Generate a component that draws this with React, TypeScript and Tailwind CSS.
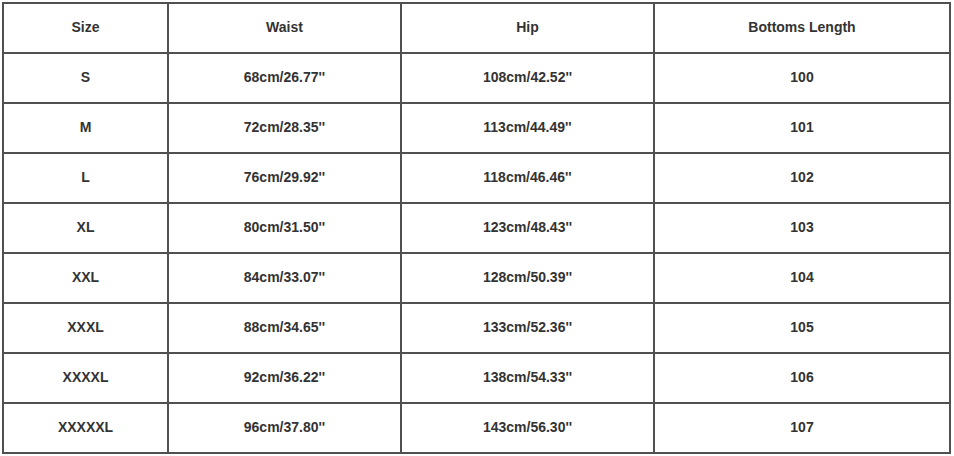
const headers = ["Size", "Waist", "Hip", "Bottoms Length"];

const rows: string[][] = [
  ["S", "68cm/26.77''", "108cm/42.52''", "100"],
  ["M", "72cm/28.35''", "113cm/44.49''", "101"],
  ["L", "76cm/29.92''", "118cm/46.46''", "102"],
  ["XL", "80cm/31.50''", "123cm/48.43''", "103"],
  ["XXL", "84cm/33.07''", "128cm/50.39''", "104"],
  ["XXXL", "88cm/34.65''", "133cm/52.36''", "105"],
  ["XXXXL", "92cm/36.22''", "138cm/54.33''", "106"],
  ["XXXXXL", "96cm/37.80''", "143cm/56.30''", "107"],
];

function Cell({ children }: { children: React.ReactNode }) {
  return (
    <div className="flex h-[50px] items-center justify-center border-r-2 border-b-2 border-[#505050] pb-[2px] text-[14px] font-bold text-[#333]">
      {children}
    </div>
  );
}

export default function App() {
  return (
    <div className="h-[456px] w-[954px] bg-white" style={{ fontFamily: '"Liberation Sans", Arial, sans-serif' }}>
      <div className="ml-[2px] mt-[2px] grid w-fit grid-cols-[165px_233px_253px_296px] border-l-2 border-t-2 border-[#505050]">
        {headers.map((h) => (
          <Cell key={h}>{h}</Cell>
        ))}
        {rows.map((r) =>
          r.map((v, i) => <Cell key={r[0] + i}>{v}</Cell>)
        )}
      </div>
    </div>
  );
}
